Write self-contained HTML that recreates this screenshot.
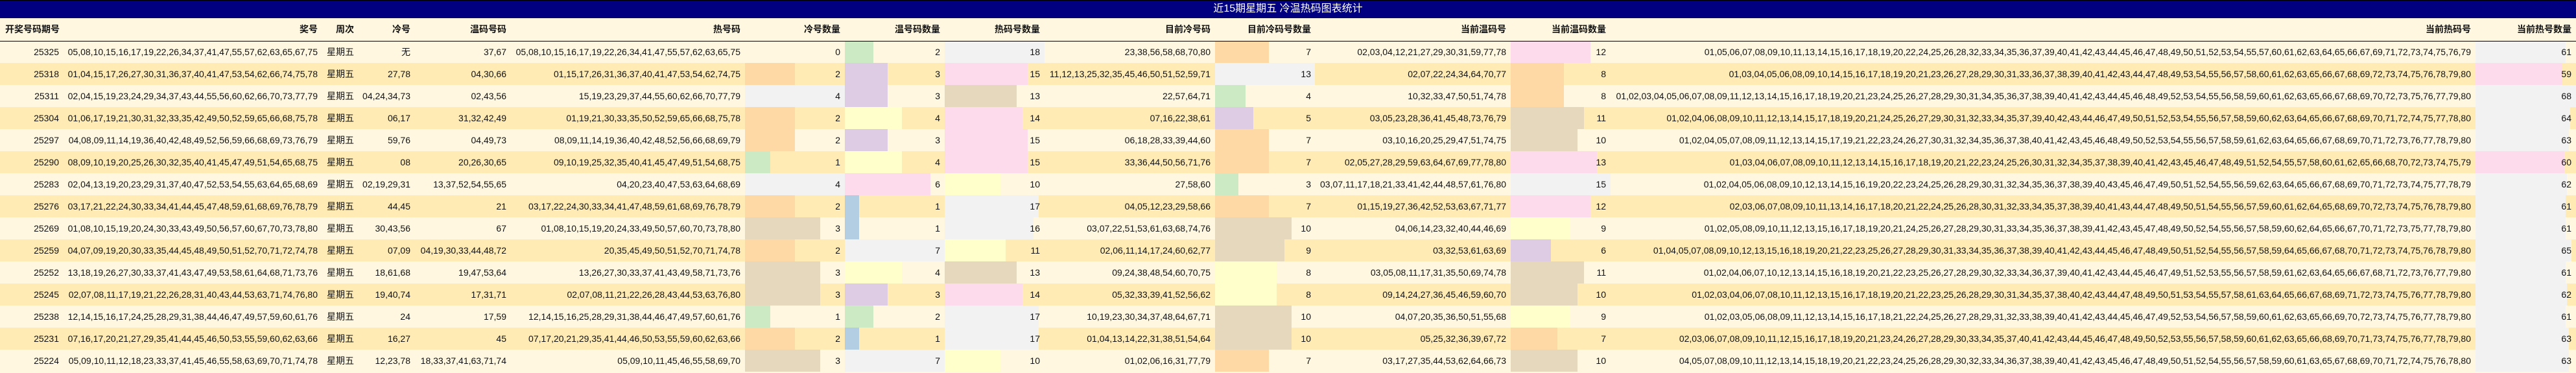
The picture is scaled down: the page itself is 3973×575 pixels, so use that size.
<!DOCTYPE html>
<html><head><meta charset="utf-8">
<style>
*{margin:0;padding:0;box-sizing:border-box}
html,body{width:3973px;height:575px;overflow:hidden;background:#fff7df}
body{font-family:"Liberation Sans","Noto Sans CJK SC",sans-serif;font-size:14px;color:#111}
.t{height:28px;background:#000080;border-top:1px solid #000;border-bottom:1px solid #000;color:#fff;font-size:16px;text-align:center;line-height:26px}
table{border-collapse:collapse;table-layout:fixed;width:3973px}
td,th{height:34px;padding:0 7px 0 0;text-align:right;white-space:nowrap;vertical-align:middle;overflow:visible}
th{font-weight:bold;height:35px;background:#fff7df;border-bottom:1px solid #000}
th.l{text-align:left;padding-left:8px}
tr:nth-child(odd) td{background:#fff7df}
tr:nth-child(even) td{background:#ffebb3}
td.n{position:relative}
td.n i{position:absolute;left:0;top:0;bottom:0}
td.n b{position:relative;font-weight:normal}
.P{background:#fed9a6}.G{background:#f2f2f2}.R{background:#ccebc5}.U{background:#decbe4}.Y{background:#ffffcc}.K{background:#fddaec}.T{background:#e5d8bd}.B{background:#b3cde3}
</style></head><body>
<div class="t">近15期星期五 冷温热码图表统计</div>
<table>
<colgroup><col style="width:98px"><col style="width:399px"><col style="width:56px"><col style="width:87px"><col style="width:148px"><col style="width:361px"><col style="width:154px"><col style="width:154px"><col style="width:154px"><col style="width:263px"><col style="width:155px"><col style="width:301px"><col style="width:154px"><col style="width:1334px"><col style="width:155px"></colgroup>
<thead><tr><th class="l">开奖号码期号</th><th>奖号</th><th>周次</th><th>冷号</th><th>温码号码</th><th>热号码</th><th>冷号数量</th><th>温号码数量</th><th>热码号数量</th><th>目前冷号码</th><th>目前冷码号数量</th><th>当前温码号</th><th>当前温码数量</th><th>当前热码号</th><th>当前热号数量</th></tr></thead>
<tbody>
<tr><td>25325</td><td>05,08,10,15,16,17,19,22,26,34,37,41,47,55,57,62,63,65,67,75</td><td>星期五</td><td>无</td><td>37,67</td><td>05,08,10,15,16,17,19,22,26,34,41,47,55,57,62,63,65,75</td><td class="n"><b>0</b></td><td class="n"><i class="R" style="width:44px"></i><b>2</b></td><td class="n"><i class="G" style="width:154px"></i><b>18</b></td><td>23,38,56,58,68,70,80</td><td class="n"><i class="P" style="width:83px"></i><b>7</b></td><td>02,03,04,12,21,27,29,30,31,59,77,78</td><td class="n"><i class="K" style="width:123px"></i><b>12</b></td><td>01,05,06,07,08,09,10,11,13,14,15,16,17,18,19,20,22,24,25,26,28,32,33,34,35,36,37,39,40,41,42,43,44,45,46,47,48,49,50,51,52,53,54,55,57,60,61,62,63,64,65,66,67,69,71,72,73,74,75,76,79</td><td class="n"><i class="G" style="width:139px"></i><b>61</b></td></tr>
<tr><td>25318</td><td>01,04,15,17,26,27,30,31,36,37,40,41,47,53,54,62,66,74,75,78</td><td>星期五</td><td>27,78</td><td>04,30,66</td><td>01,15,17,26,31,36,37,40,41,47,53,54,62,74,75</td><td class="n"><i class="P" style="width:77px"></i><b>2</b></td><td class="n"><i class="U" style="width:66px"></i><b>3</b></td><td class="n"><i class="K" style="width:128px"></i><b>15</b></td><td>11,12,13,25,32,35,45,46,50,51,52,59,71</td><td class="n"><i class="G" style="width:154px"></i><b>13</b></td><td>02,07,22,24,34,64,70,77</td><td class="n"><i class="P" style="width:82px"></i><b>8</b></td><td>01,03,04,05,06,08,09,10,14,15,16,17,18,19,20,21,23,26,27,28,29,30,31,33,36,37,38,39,40,41,42,43,44,47,48,49,53,54,55,56,57,58,60,61,62,63,65,66,67,68,69,72,73,74,75,76,78,79,80</td><td class="n"><i class="K" style="width:134px"></i><b>59</b></td></tr>
<tr><td>25311</td><td>02,04,15,19,23,24,29,34,37,43,44,55,56,60,62,66,70,73,77,79</td><td>星期五</td><td>04,24,34,73</td><td>02,43,56</td><td>15,19,23,29,37,44,55,60,62,66,70,77,79</td><td class="n"><i class="G" style="width:154px"></i><b>4</b></td><td class="n"><i class="U" style="width:66px"></i><b>3</b></td><td class="n"><i class="T" style="width:111px"></i><b>13</b></td><td>22,57,64,71</td><td class="n"><i class="R" style="width:47px"></i><b>4</b></td><td>10,32,33,47,50,51,74,78</td><td class="n"><i class="P" style="width:82px"></i><b>8</b></td><td>01,02,03,04,05,06,07,08,09,11,12,13,14,15,16,17,18,19,20,21,23,24,25,26,27,28,29,30,31,34,35,36,37,38,39,40,41,42,43,44,45,46,48,49,52,53,54,55,56,58,59,60,61,62,63,65,66,67,68,69,70,72,73,75,76,77,79,80</td><td class="n"><i class="G" style="width:155px"></i><b>68</b></td></tr>
<tr><td>25304</td><td>01,06,17,19,21,30,31,32,33,35,42,49,50,52,59,65,66,68,75,78</td><td>星期五</td><td>06,17</td><td>31,32,42,49</td><td>01,19,21,30,33,35,50,52,59,65,66,68,75,78</td><td class="n"><i class="P" style="width:77px"></i><b>2</b></td><td class="n"><i class="Y" style="width:88px"></i><b>4</b></td><td class="n"><i class="K" style="width:120px"></i><b>14</b></td><td>07,16,22,38,61</td><td class="n"><i class="U" style="width:59px"></i><b>5</b></td><td>03,05,23,28,36,41,45,48,73,76,79</td><td class="n"><i class="T" style="width:113px"></i><b>11</b></td><td>01,02,04,06,08,09,10,11,12,13,14,15,17,18,19,20,21,24,25,26,27,29,30,31,32,33,34,35,37,39,40,42,43,44,46,47,49,50,51,52,53,54,55,56,57,58,59,60,62,63,64,65,66,67,68,69,70,71,72,74,75,77,78,80</td><td class="n"><i class="G" style="width:146px"></i><b>64</b></td></tr>
<tr><td>25297</td><td>04,08,09,11,14,19,36,40,42,48,49,52,56,59,66,68,69,73,76,79</td><td>星期五</td><td>59,76</td><td>04,49,73</td><td>08,09,11,14,19,36,40,42,48,52,56,66,68,69,79</td><td class="n"><i class="P" style="width:77px"></i><b>2</b></td><td class="n"><i class="U" style="width:66px"></i><b>3</b></td><td class="n"><i class="K" style="width:128px"></i><b>15</b></td><td>06,18,28,33,39,44,60</td><td class="n"><i class="P" style="width:83px"></i><b>7</b></td><td>03,10,16,20,25,29,47,51,74,75</td><td class="n"><i class="T" style="width:103px"></i><b>10</b></td><td>01,02,04,05,07,08,09,11,12,13,14,15,17,19,21,22,23,24,26,27,30,31,32,34,35,36,37,38,40,41,42,43,45,46,48,49,50,52,53,54,55,56,57,58,59,61,62,63,64,65,66,67,68,69,70,71,72,73,76,77,78,79,80</td><td class="n"><i class="G" style="width:144px"></i><b>63</b></td></tr>
<tr><td>25290</td><td>08,09,10,19,20,25,26,30,32,35,40,41,45,47,49,51,54,65,68,75</td><td>星期五</td><td>08</td><td>20,26,30,65</td><td>09,10,19,25,32,35,40,41,45,47,49,51,54,68,75</td><td class="n"><i class="R" style="width:39px"></i><b>1</b></td><td class="n"><i class="Y" style="width:88px"></i><b>4</b></td><td class="n"><i class="K" style="width:128px"></i><b>15</b></td><td>33,36,44,50,56,71,76</td><td class="n"><i class="P" style="width:83px"></i><b>7</b></td><td>02,05,27,28,29,59,63,64,67,69,77,78,80</td><td class="n"><i class="K" style="width:133px"></i><b>13</b></td><td>01,03,04,06,07,08,09,10,11,12,13,14,15,16,17,18,19,20,21,22,23,24,25,26,30,31,32,34,35,37,38,39,40,41,42,43,45,46,47,48,49,51,52,54,55,57,58,60,61,62,65,66,68,70,72,73,74,75,79</td><td class="n"><i class="K" style="width:137px"></i><b>60</b></td></tr>
<tr><td>25283</td><td>02,04,13,19,20,23,29,31,37,40,47,52,53,54,55,63,64,65,68,69</td><td>星期五</td><td>02,19,29,31</td><td>13,37,52,54,55,65</td><td>04,20,23,40,47,53,63,64,68,69</td><td class="n"><i class="G" style="width:154px"></i><b>4</b></td><td class="n"><i class="K" style="width:132px"></i><b>6</b></td><td class="n"><i class="Y" style="width:86px"></i><b>10</b></td><td>27,58,60</td><td class="n"><i class="R" style="width:36px"></i><b>3</b></td><td>03,07,11,17,18,21,33,41,42,44,48,57,61,76,80</td><td class="n"><i class="G" style="width:154px"></i><b>15</b></td><td>01,02,04,05,06,08,09,10,12,13,14,15,16,19,20,22,23,24,25,26,28,29,30,31,32,34,35,36,37,38,39,40,43,45,46,47,49,50,51,52,54,55,56,59,62,63,64,65,66,67,68,69,70,71,72,73,74,75,77,78,79</td><td class="n"><i class="G" style="width:141px"></i><b>62</b></td></tr>
<tr><td>25276</td><td>03,17,21,22,24,30,33,34,41,44,45,47,48,59,61,68,69,76,78,79</td><td>星期五</td><td>44,45</td><td>21</td><td>03,17,22,24,30,33,34,41,47,48,59,61,68,69,76,78,79</td><td class="n"><i class="P" style="width:77px"></i><b>2</b></td><td class="n"><i class="B" style="width:22px"></i><b>1</b></td><td class="n"><i class="G" style="width:145px"></i><b>17</b></td><td>04,05,12,23,29,58,66</td><td class="n"><i class="P" style="width:83px"></i><b>7</b></td><td>01,15,19,27,36,42,52,53,63,67,71,77</td><td class="n"><i class="K" style="width:123px"></i><b>12</b></td><td>02,03,06,07,08,09,10,11,13,14,16,17,18,20,21,22,24,25,26,28,30,31,32,33,34,35,37,38,39,40,41,43,44,47,48,49,50,51,54,55,56,57,59,60,61,62,64,65,68,69,70,72,73,74,75,76,78,79,80</td><td class="n"><i class="G" style="width:139px"></i><b>61</b></td></tr>
<tr><td>25269</td><td>01,08,10,15,19,20,24,30,33,43,49,50,56,57,60,67,70,73,78,80</td><td>星期五</td><td>30,43,56</td><td>67</td><td>01,08,10,15,19,20,24,33,49,50,57,60,70,73,78,80</td><td class="n"><i class="T" style="width:116px"></i><b>3</b></td><td class="n"><i class="B" style="width:22px"></i><b>1</b></td><td class="n"><i class="G" style="width:137px"></i><b>16</b></td><td>03,07,22,51,53,61,63,68,74,76</td><td class="n"><i class="T" style="width:118px"></i><b>10</b></td><td>04,06,14,23,32,40,44,46,69</td><td class="n"><i class="Y" style="width:92px"></i><b>9</b></td><td>01,02,05,08,09,10,11,12,13,15,16,17,18,19,20,21,24,25,26,27,28,29,30,31,33,34,35,36,37,38,39,41,42,43,45,47,48,49,50,52,54,55,56,57,58,59,60,62,64,65,66,67,70,71,72,73,75,77,78,79,80</td><td class="n"><i class="G" style="width:139px"></i><b>61</b></td></tr>
<tr><td>25259</td><td>04,07,09,19,20,30,33,35,44,45,48,49,50,51,52,70,71,72,74,78</td><td>星期五</td><td>07,09</td><td>04,19,30,33,44,48,72</td><td>20,35,45,49,50,51,52,70,71,74,78</td><td class="n"><i class="P" style="width:77px"></i><b>2</b></td><td class="n"><i class="G" style="width:154px"></i><b>7</b></td><td class="n"><i class="Y" style="width:94px"></i><b>11</b></td><td>02,06,11,14,17,24,60,62,77</td><td class="n"><i class="T" style="width:107px"></i><b>9</b></td><td>03,32,53,61,63,69</td><td class="n"><i class="U" style="width:62px"></i><b>6</b></td><td>01,04,05,07,08,09,10,12,13,15,16,18,19,20,21,22,23,25,26,27,28,29,30,31,33,34,35,36,37,38,39,40,41,42,43,44,45,46,47,48,49,50,51,52,54,55,56,57,58,59,64,65,66,67,68,70,71,72,73,74,75,76,78,79,80</td><td class="n"><i class="G" style="width:148px"></i><b>65</b></td></tr>
<tr><td>25252</td><td>13,18,19,26,27,30,33,37,41,43,47,49,53,58,61,64,68,71,73,76</td><td>星期五</td><td>18,61,68</td><td>19,47,53,64</td><td>13,26,27,30,33,37,41,43,49,58,71,73,76</td><td class="n"><i class="T" style="width:116px"></i><b>3</b></td><td class="n"><i class="Y" style="width:88px"></i><b>4</b></td><td class="n"><i class="T" style="width:111px"></i><b>13</b></td><td>09,24,38,48,54,60,70,75</td><td class="n"><i class="Y" style="width:95px"></i><b>8</b></td><td>03,05,08,11,17,31,35,50,69,74,78</td><td class="n"><i class="T" style="width:113px"></i><b>11</b></td><td>01,02,04,06,07,10,12,13,14,15,16,18,19,20,21,22,23,25,26,27,28,29,30,32,33,34,36,37,39,40,41,42,43,44,45,46,47,49,51,52,53,55,56,57,58,59,61,62,63,64,65,66,67,68,71,72,73,76,77,79,80</td><td class="n"><i class="G" style="width:139px"></i><b>61</b></td></tr>
<tr><td>25245</td><td>02,07,08,11,17,19,21,22,26,28,31,40,43,44,53,63,71,74,76,80</td><td>星期五</td><td>19,40,74</td><td>17,31,71</td><td>02,07,08,11,21,22,26,28,43,44,53,63,76,80</td><td class="n"><i class="T" style="width:116px"></i><b>3</b></td><td class="n"><i class="U" style="width:66px"></i><b>3</b></td><td class="n"><i class="K" style="width:120px"></i><b>14</b></td><td>05,32,33,39,41,52,56,62</td><td class="n"><i class="Y" style="width:95px"></i><b>8</b></td><td>09,14,24,27,36,45,46,59,60,70</td><td class="n"><i class="T" style="width:103px"></i><b>10</b></td><td>01,02,03,04,06,07,08,10,11,12,13,15,16,17,18,19,20,21,22,23,25,26,28,29,30,31,34,35,37,38,40,42,43,44,47,48,49,50,51,53,54,55,57,58,61,63,64,65,66,67,68,69,71,72,73,74,75,76,77,78,79,80</td><td class="n"><i class="G" style="width:141px"></i><b>62</b></td></tr>
<tr><td>25238</td><td>12,14,15,16,17,24,25,28,29,31,38,44,46,47,49,57,59,60,61,76</td><td>星期五</td><td>24</td><td>17,59</td><td>12,14,15,16,25,28,29,31,38,44,46,47,49,57,60,61,76</td><td class="n"><i class="R" style="width:39px"></i><b>1</b></td><td class="n"><i class="R" style="width:44px"></i><b>2</b></td><td class="n"><i class="G" style="width:145px"></i><b>17</b></td><td>10,19,23,30,34,37,48,64,67,71</td><td class="n"><i class="T" style="width:118px"></i><b>10</b></td><td>04,07,20,35,36,50,51,55,68</td><td class="n"><i class="Y" style="width:92px"></i><b>9</b></td><td>01,02,03,05,06,08,09,11,12,13,14,15,16,17,18,21,22,24,25,26,27,28,29,31,32,33,38,39,40,41,42,43,44,45,46,47,49,52,53,54,56,57,58,59,60,61,62,63,65,66,69,70,72,73,74,75,76,77,78,79,80</td><td class="n"><i class="G" style="width:139px"></i><b>61</b></td></tr>
<tr><td>25231</td><td>07,16,17,20,21,27,29,35,41,44,45,46,50,53,55,59,60,62,63,66</td><td>星期五</td><td>16,27</td><td>45</td><td>07,17,20,21,29,35,41,44,46,50,53,55,59,60,62,63,66</td><td class="n"><i class="P" style="width:77px"></i><b>2</b></td><td class="n"><i class="B" style="width:22px"></i><b>1</b></td><td class="n"><i class="G" style="width:145px"></i><b>17</b></td><td>01,04,13,14,22,31,38,51,54,64</td><td class="n"><i class="T" style="width:118px"></i><b>10</b></td><td>05,25,32,36,39,67,72</td><td class="n"><i class="P" style="width:72px"></i><b>7</b></td><td>02,03,06,07,08,09,10,11,12,15,16,17,18,19,20,21,23,24,26,27,28,29,30,33,34,35,37,40,41,42,43,44,45,46,47,48,49,50,52,53,55,56,57,58,59,60,61,62,63,65,66,68,69,70,71,73,74,75,76,77,78,79,80</td><td class="n"><i class="G" style="width:144px"></i><b>63</b></td></tr>
<tr><td>25224</td><td>05,09,10,11,12,18,23,33,37,41,45,46,55,58,63,69,70,71,74,78</td><td>星期五</td><td>12,23,78</td><td>18,33,37,41,63,71,74</td><td>05,09,10,11,45,46,55,58,69,70</td><td class="n"><i class="T" style="width:116px"></i><b>3</b></td><td class="n"><i class="G" style="width:154px"></i><b>7</b></td><td class="n"><i class="Y" style="width:86px"></i><b>10</b></td><td>01,02,06,16,31,77,79</td><td class="n"><i class="P" style="width:83px"></i><b>7</b></td><td>03,17,27,35,44,53,62,64,66,73</td><td class="n"><i class="T" style="width:103px"></i><b>10</b></td><td>04,05,07,08,09,10,11,12,13,14,15,18,19,20,21,22,23,24,25,26,28,29,30,32,33,34,36,37,38,39,40,41,42,43,45,46,47,48,49,50,51,52,54,55,56,57,58,59,60,61,63,65,67,68,69,70,71,72,74,75,76,78,80</td><td class="n"><i class="G" style="width:144px"></i><b>63</b></td></tr>
</tbody></table>
</body></html>
